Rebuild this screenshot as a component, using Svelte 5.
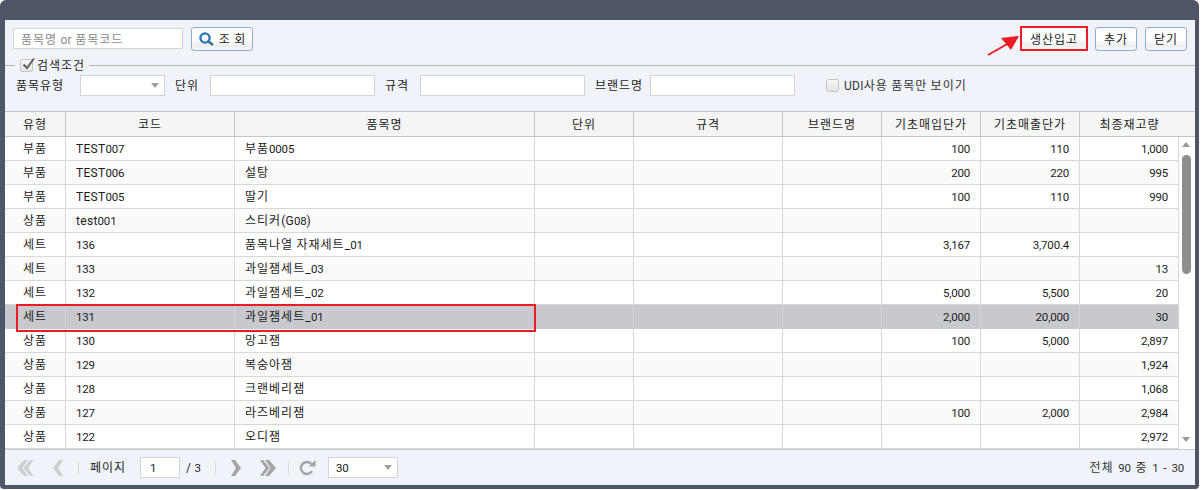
<script>
  const cols = [61, 169, 300, 99, 149, 99, 99, 99, 99];
  const heads = ['유형', '코드', '품목명', '단위', '규격', '브랜드명', '기초매입단가', '기초매출단가', '최종재고량'];
  const rows = [
    ['부품', 'TEST007', '부품0005', '100', '110', '1,000'],
    ['부품', 'TEST006', '설탕', '200', '220', '995'],
    ['부품', 'TEST005', '딸기', '100', '110', '990'],
    ['상품', 'test001', '스티커(G08)', '', '', ''],
    ['세트', '136', '품목나열 자재세트_01', '3,167', '3,700.4', ''],
    ['세트', '133', '과일잼세트_03', '', '', '13'],
    ['세트', '132', '과일잼세트_02', '5,000', '5,500', '20'],
    ['세트', '131', '과일잼세트_01', '2,000', '20,000', '30'],
    ['상품', '130', '망고잼', '100', '5,000', '2,897'],
    ['상품', '129', '복숭아잼', '', '', '1,924'],
    ['상품', '128', '크랜베리잼', '', '', '1,068'],
    ['상품', '127', '라즈베리잼', '100', '2,000', '2,984'],
    ['상품', '122', '오디잼', '', '', '2,972']
  ];
  function runs(text) {
    const parts = text.match(/[\uAC00-\uD7A3]+|[0-9,.]+| +|[^\uAC00-\uD7A3 0-9,.]+/g) || [];
    return parts.map((s) => ({
      s,
      c: /[\uAC00-\uD7A3]/.test(s) ? 'ko' : /[0-9]/.test(s) ? 'dg' : 'la'
    }));
  }
</script>

{#snippet t(text)}<span class="txt">{#each runs(text) as r}<span class={r.c}>{r.s}</span>{/each}</span>{/snippet}

{#snippet check(on)}
  <span class="check">
    {#if on}
      <svg width="14" height="14" viewBox="0 0 14 14"><path d="M2.5 7.5 L6 11 L13 1.5" fill="none" stroke="#5f5f5f" stroke-width="2"/></svg>
    {/if}
  </span>
{/snippet}

<div class="frame">
  <div class="panel">
    <div class="top">
      <div class="box search">{@render t('품목명 or 품목코드')}</div>
      <button class="btn query">
        <svg width="18" height="16" viewBox="0 0 18 16">
          <circle cx="7" cy="7" r="4.6" fill="none" stroke="#2f78b8" stroke-width="2.4"/>
          <path d="M10.5 10.5 L15 14" stroke="#3f6f8f" stroke-width="2.6"/>
        </svg>
        {@render t('조 회')}
      </button>
      <div class="spacer"></div>
      <button class="btn prod">{@render t('생산입고')}</button>
      <button class="btn small">{@render t('추가')}</button>
      <button class="btn small">{@render t('닫기')}</button>
    </div>

    <div class="legend">
      <span class="stub"></span>
      {@render check(true)}
      <span class="legend-label">{@render t('검색조건')}</span>
      <span class="rule"></span>
    </div>

    <div class="filters">
      <span class="f-type">{@render t('품목유형')}</span>
      <div class="box w85 select"><span class="caret"></span></div>
      <span class="f-unit">{@render t('단위')}</span>
      <div class="box w165"></div>
      <span class="f-unit">{@render t('규격')}</span>
      <div class="box w165"></div>
      <span class="f-brand">{@render t('브랜드명')}</span>
      <div class="box w145"></div>
      <span class="f-udi">{@render check(false)}{@render t('UDI사용 품목만 보이기')}</span>
    </div>

    <div class="grid">
      <div class="head">
        {#each heads as h, i}
          <div class="hcell" style="width:{cols[i]}px">{@render t(h)}</div>
        {/each}
      </div>
      <div class="body">
        <div class="rows">
          {#each rows as r, n}
            <div class="row" class:alt={n % 2 === 1} class:sel={n === 7}>
              <div class="cell center" style="width:{cols[0]}px">{@render t(r[0])}</div>
              <div class="cell left" style="width:{cols[1]}px">{@render t(r[1])}</div>
              <div class="cell left" style="width:{cols[2]}px">{@render t(r[2])}</div>
              <div class="cell" style="width:{cols[3]}px"></div>
              <div class="cell" style="width:{cols[4]}px"></div>
              <div class="cell" style="width:{cols[5]}px"></div>
              <div class="cell right" style="width:{cols[6]}px">{@render t(r[3])}</div>
              <div class="cell right" style="width:{cols[7]}px">{@render t(r[4])}</div>
              <div class="cell right" style="width:{cols[8]}px">{@render t(r[5])}</div>
            </div>
          {/each}
        </div>
        <div class="scroll">
          <span class="arrow up"></span>
          <span class="thumb"></span>
          <span class="arrow down"></span>
        </div>
      </div>
    </div>

    <div class="pager">
      <svg class="ic first" width="17" height="16" viewBox="0 0 17 16"><path d="M7 0 H11 L5.5 8 L11 16 H7 L0 8 Z M13 0 H16.5 L11 8 L16.5 16 H13 L6.5 8 Z" fill="#cdd0d3"/></svg>
      <svg class="ic prev" width="10" height="16" viewBox="0 0 10 16"><path d="M6 0 H10 L5 8 L10 16 H6 L0 8 Z" fill="#cdd0d3"/></svg>
      <span class="sep s1"></span>
      <span class="plabel">{@render t('페이지')}</span>
      <div class="box pinput">{@render t('1')}</div>
      <span class="ptotal">{@render t('/ 3')}</span>
      <span class="sep s2"></span>
      <svg class="ic next" width="10" height="16" viewBox="0 0 10 16"><path d="M4 0 H0 L5 8 L0 16 H4 L10 8 Z" fill="#a2a4a6"/></svg>
      <svg class="ic last" width="17" height="16" viewBox="0 0 17 16"><path d="M3 0 H0 L5.5 8 L0 16 H3 L9.5 8 Z M9 0 H5 L10.5 8 L5 16 H9 L16 8 Z" fill="#a2a4a6"/></svg>
      <span class="sep s3"></span>
      <svg class="ic reload" width="17" height="16" viewBox="0 0 17 16">
        <path d="M13 11.2 A6 6 0 1 1 12.4 4" fill="none" stroke="#a2a4a6" stroke-width="2.4"/>
        <path d="M10 6.5 H16.5 V0 Z" fill="#a2a4a6"/>
      </svg>
      <div class="box psize">{@render t('30')}<span class="caret"></span></div>
      <div class="spacer"></div>
      <span class="summary">{@render t('전체 90 중 1 - 30')}</span>
    </div>
  </div>

  <span class="mark-row"></span>
  <svg class="mark-arrow" width="36" height="24" viewBox="0 0 36 24">
    <path d="M1 22 L22 10" stroke="#ed1c24" stroke-width="2" fill="none"/>
    <path d="M32 3 L14 5 L24 17 Z" fill="#ed1c24"/>
  </svg>
</div>

<style>
  :global(body) {
    background: #fff;
  }
  .frame {
    position: relative;
    box-sizing: border-box;
    width: 1199px;
    height: 489px;
    padding: 20px 4px 4px 5px;
    background: #4f5668;
    border-radius: 6px 6px 4px 4px;
    color: #1c1c1c;
    font-family: "Noto Sans CJK KR", sans-serif;
    font-size: 12px;
  }
  .panel {
    display: flex;
    flex-direction: column;
    height: 465px;
    background: #f0f4fa;
  }
  .txt {
    white-space: pre;
  }
  .ko {
    font-family: "Noto Sans CJK KR", sans-serif;
    font-size: 12px;
    letter-spacing: 1px;
    font-weight: 400;
  }
  .dg {
    font-family: Roboto, "Liberation Sans", sans-serif;
    font-size: 11.5px;
    letter-spacing: -0.2px;
  }
  .la {
    font-family: Roboto, "Liberation Sans", sans-serif;
    font-size: 12px;
    letter-spacing: 0.3px;
  }
  .top {
    display: flex;
    align-items: center;
    height: 25px;
    margin: 6px 8px 0;
  }
  .spacer {
    flex: 1;
  }
  .box {
    box-sizing: border-box;
    display: flex;
    align-items: center;
    height: 21px;
    background: #fff;
    border: 1px solid #d2d4d8;
  }
  .search {
    width: 170px;
    padding-left: 7px;
    color: #8a8a8a;
  }
  .btn {
    box-sizing: border-box;
    display: flex;
    align-items: center;
    justify-content: center;
    height: 24px;
    padding: 0;
    color: #1c1c1c;
    background: linear-gradient(#fff 0%, #fff 50%, #eceef0 80%, #f6f7f9 100%);
    border: 1px solid #8faedb;
    border-radius: 3px;
  }
  .query {
    width: 62px;
    margin-left: 8px;
    gap: 3px;
  }
  .prod {
    width: 68px;
    height: 25px;
    margin-right: 7px;
    border: 2px solid #ed1c24;
    border-radius: 0;
  }
  .small {
    width: 42px;
    margin-left: 8px;
  }
  .prod + .small {
    margin-left: 0;
  }
  .legend {
    display: flex;
    align-items: center;
    height: 14px;
    margin-top: 7px;
  }
  .stub {
    width: 10px;
    height: 1px;
    background: #b4b6ba;
  }
  .check {
    box-sizing: border-box;
    display: inline-block;
    flex: none;
    width: 13px;
    height: 13px;
    background: linear-gradient(#f6f6f6, #e4e4e4);
    border: 1px solid #c6c6c6;
    border-radius: 2px;
  }
  .check svg {
    display: block;
    margin: -3px 0 0 0;
  }
  .legend .check {
    margin-left: 5px;
  }
  .legend-label {
    margin: 0 4px;
    padding-bottom: 2px;
  }
  .rule {
    flex: 1;
    height: 1px;
    background: #b4b6ba;
  }
  .filters {
    display: flex;
    align-items: center;
    height: 21px;
    margin-top: 3px;
  }
  .f-type,
  .f-unit,
  .f-brand {
    padding-bottom: 3px;
  }
  .f-type {
    width: 64px;
    margin-left: 11px;
  }
  .f-unit {
    width: 35px;
    margin-left: 10px;
  }
  .f-brand {
    width: 55px;
    margin-left: 10px;
  }
  .f-udi {
    display: flex;
    align-items: center;
    gap: 5px;
    margin-left: 31px;
    color: #333;
  }
  .f-udi .txt {
    padding-bottom: 3px;
  }
  .w85 {
    width: 85px;
  }
  .w165 {
    width: 165px;
  }
  .w145 {
    width: 145px;
  }
  .select,
  .psize {
    position: relative;
  }
  .caret {
    position: absolute;
    right: 5px;
    top: 7px;
    border-left: 4px solid transparent;
    border-right: 4px solid transparent;
    border-top: 5px solid #a0a0a0;
  }
  .grid {
    display: flex;
    flex-direction: column;
    margin-top: 15px;
  }
  .head {
    box-sizing: border-box;
    display: flex;
    height: 26px;
    background: #f5f5f5;
    border-top: 1px solid #c4c4c4;
    border-bottom: 1px solid #c4c4c4;
  }
  .hcell {
    box-sizing: border-box;
    display: flex;
    align-items: center;
    justify-content: center;
    padding-bottom: 1px;
    border-right: 1px solid #c8c8c8;
  }
  .hcell:last-child {
    border-right: 0;
  }
  .body {
    display: flex;
    height: 312px;
    overflow: hidden;
    background: #fff;
  }
  .rows {
    width: 1174px;
  }
  .row {
    box-sizing: border-box;
    display: flex;
    height: 24px;
    background: #fff;
    border-bottom: 1px solid #d8d8d8;
  }
  .alt {
    background: #fafafa;
  }
  .sel {
    background: #c8c9cf;
    border-bottom-color: #c8c9cf;
  }
  .cell {
    box-sizing: border-box;
    display: flex;
    align-items: flex-start;
    padding-top: 3px;
    line-height: 16px;
    border-right: 1px solid #d8d8d8;
  }
  .sel .cell {
    border-right-color: #d4d5da;
  }
  .center {
    justify-content: center;
  }
  .left {
    padding-left: 10px;
  }
  .right {
    justify-content: flex-end;
    padding-right: 10px;
  }
  .scroll {
    position: relative;
    flex: 1;
    background: #fff;
  }
  .arrow {
    position: absolute;
    left: 3px;
    border-left: 4.5px solid transparent;
    border-right: 4.5px solid transparent;
  }
  .up {
    top: 5px;
    border-bottom: 5px solid #9a9a9a;
  }
  .down {
    bottom: 7px;
    border-top: 5px solid #9a9a9a;
  }
  .thumb {
    position: absolute;
    top: 18px;
    left: 3px;
    width: 9px;
    height: 119px;
    background: #8e8e8e;
    border-radius: 5px;
  }
  .pager {
    position: relative;
    display: flex;
    align-items: center;
    flex: 1;
    border-top: 1px solid #c8c8c8;
    padding-right: 11px;
  }
  .ic {
    flex: none;
  }
  .first {
    margin-left: 12px;
  }
  .prev {
    margin-left: 19px;
  }
  .sep {
    flex: none;
    width: 1px;
    height: 14px;
    background: #d8dadd;
  }
  .s1 {
    margin-left: 15px;
  }
  .plabel {
    width: 50px;
    margin-left: 11px;
    padding-bottom: 2px;
  }
  .pinput {
    width: 40px;
    padding-left: 9px;
    padding-bottom: 2px;
  }
  .ptotal {
    box-sizing: border-box;
    width: 29px;
    padding-left: 6px;
    padding-bottom: 2px;
  }
  .s2 {
    margin-left: 6px;
  }
  .next {
    margin-left: 15px;
  }
  .last {
    margin-left: 19px;
  }
  .s3 {
    margin-left: 11px;
  }
  .reload {
    margin-left: 10px;
  }
  .psize {
    width: 70px;
    margin-left: 12px;
    padding-left: 7px;
    padding-bottom: 2px;
  }
  .summary {
    color: #333;
    word-spacing: 1.4px;
    padding-bottom: 2px;
  }
  .mark-row {
    position: absolute;
    left: 16px;
    top: 304px;
    width: 520px;
    height: 28px;
    box-sizing: border-box;
    border: 2px solid #ed1c24;
  }
  .mark-arrow {
    position: absolute;
    left: 987px;
    top: 33px;
  }
</style>
